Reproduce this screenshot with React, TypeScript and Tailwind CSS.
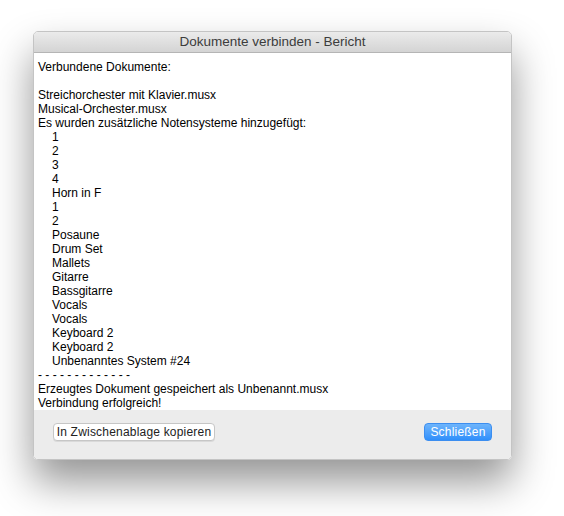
import React from "react";

const indented = [
  "1",
  "2",
  "3",
  "4",
  "Horn in F",
  "1",
  "2",
  "Posaune",
  "Drum Set",
  "Mallets",
  "Gitarre",
  "Bassgitarre",
  "Vocals",
  "Vocals",
  "Keyboard 2",
  "Keyboard 2",
  "Unbenanntes System #24",
];

export default function App() {
  return (
    <div
      className="w-[564px] h-[516px] bg-white overflow-hidden"
      style={{ fontFamily: '"Liberation Sans", Arial, sans-serif' }}
    >
      <div className="ml-[33px] mt-[31px] w-[479px] h-[429px] flex flex-col rounded-[5px] overflow-hidden border border-[#c4c4c4] shadow-[0_22px_40px_rgba(0,0,0,0.42)]">
        <div className="h-[21px] shrink-0 flex items-center justify-center bg-gradient-to-b from-[#ebebeb] to-[#d4d4d4] border-b border-[#b5b5b5] text-[13.5px] text-[#3c3c3c]">
          Dokumente verbinden - Bericht
        </div>
        <div className="flex-1 bg-white pt-[7px] pl-[4px] text-[12px] leading-[14px] text-black">
          <div>Verbundene Dokumente:</div>
          <div className="h-[14px]" />
          <div>Streichorchester mit Klavier.musx</div>
          <div>Musical-Orchester.musx</div>
          <div>Es wurden zusätzliche Notensysteme hinzugefügt:</div>
          {indented.map((t, i) => (
            <div key={i} className="pl-[14px]">
              {t}
            </div>
          ))}
          <div>- - - - - - - - - - - - -</div>
          <div>Erzeugtes Dokument gespeichert als Unbenannt.musx</div>
          <div>Verbindung erfolgreich!</div>
        </div>
        <div className="h-[51px] shrink-0 bg-[#ececec] flex items-start justify-between pt-[13px] pl-[19px] pr-[19px]">
          <button className="h-[18px] w-[162px] whitespace-nowrap rounded-[4px] bg-white border border-[#c6c6c6] shadow-[0_1px_0_rgba(0,0,0,0.08)] text-[12px] tracking-[0.2px] leading-[16px] text-[#222] flex items-center justify-center">
            In Zwischenablage kopieren
          </button>
          <button className="h-[18px] w-[68px] whitespace-nowrap rounded-[4px] bg-gradient-to-b from-[#6db4fb] to-[#2f8ffb] border border-[#3c8ef0] text-[12px] tracking-[0.2px] leading-[16px] text-white flex items-center justify-center">
            Schließen
          </button>
        </div>
      </div>
    </div>
  );
}
